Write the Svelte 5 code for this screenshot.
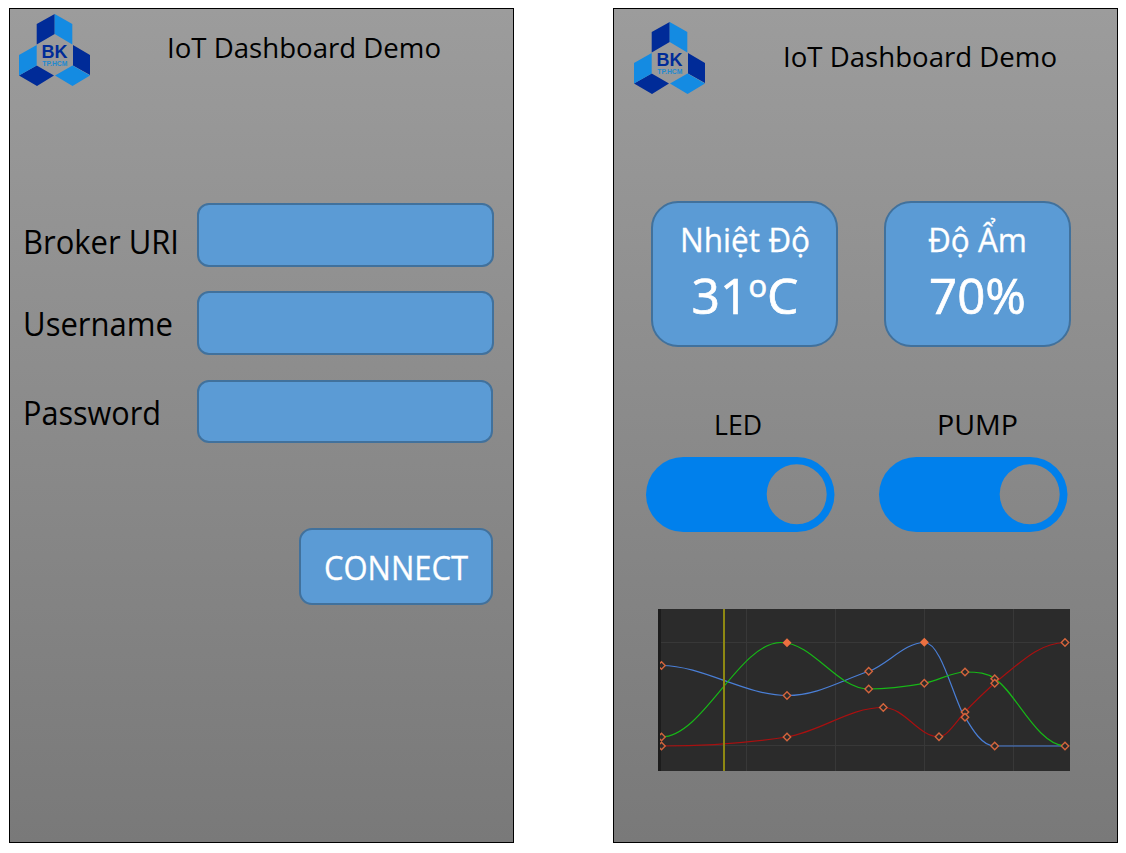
<script>
  const fields = [
    { label: 'Broker URI', width: 154, id: 'broker' },
    { label: 'Username', width: 148, id: 'username' },
    { label: 'Password', width: 136, id: 'password' }
  ];
  const switches = [
    { label: 'LED', width: 48 },
    { label: 'PUMP', width: 81 }
  ];
  const grid = [88.5, 177.5, 266.5, 355.5];
  const curves = [
    { color: '#a81010', d: 'M3.5 137C45 137 90 134 129 128C164 122 191 98.5 225.3 98.5C247 98.5 260 127.7 281 127.7C289 127.7 297 114 307 103C315 94 326 84 336.7 74C361 55 380 34 407 33.5' },
    { color: '#4a7fd6', d: 'M3.5 56.5C45 56.5 87 86.5 129 86.5C160 86.5 184 71 211 62.3C230 55 247 33.5 266.3 33.5C282 33.5 293 80 304 103C313 118 323 137 336.7 137H407' },
    { color: '#17b817', d: 'M3.5 128C45 128 81 33.5 123 33.5C155 33.5 179 80 210.7 80C231 80 251 77 266.3 74.3C281 71 295 63 307 63C320 63 329 64 336.7 69.7C357 82 379 136 407 137' }
  ];
  const keys = [
    [3.5, 56.5], [3.5, 128], [3.5, 137], [129, 86.5], [129, 128],
    [210.7, 62.3], [210.7, 80], [225.3, 98.5], [266.3, 74.3], [281, 127.7],
    [307, 63], [307, 103], [307, 108.3], [336.7, 69.7], [336.7, 74.3],
    [336.7, 137], [407, 33.5], [407, 137]
  ];
  const peaks = [[129, 33.7], [266.3, 33.3]];
</script>

{#snippet logo()}
  <svg class="logo" width="72" height="73" viewBox="0 0 72 73">
    <path fill="#002b98" d="M35.7 0V20L17.7 30.5V10zM54 31L71 41V61L54 51.500zM0 61.500L17.700 51.500L35 61.500L18 72z" />
    <path fill="#148be2" d="M35.7 0L53.3 10V30.500L35.700 20zM17.700 31V51.500L0 61.500V41zM36 61.500L53.500 51.500L71 61.500L53.500 72z" />
    <text x="22.500" y="43.500" font-size="17.500" font-weight="700" textLength="26" lengthAdjust="spacingAndGlyphs" fill="#002b98">BK</text>
    <text x="23.300" y="51.600" font-size="6.500" font-weight="700" textLength="25" lengthAdjust="spacingAndGlyphs" fill="#2189d0">TP.HCM</text>
  </svg>
{/snippet}

{#snippet fitted(text, width, size)}
  <svg class="fitted" {width} height={size} font-size={size}>
    <text y={size * 0.86} textLength={width} lengthAdjust="spacingAndGlyphs">{text}</text>
  </svg>
{/snippet}

<main>
  <section class="panel">
    <header>
      {@render logo()}
      {@render fitted('IoT Dashboard Demo', 274, 28)}
    </header>
    <form>
      {#each fields as f}
        <div class="field {f.id}">
          <label for={f.id}>{@render fitted(f.label, f.width + 2, 32)}</label>
          <input id={f.id} aria-label={f.label} />
        </div>
      {/each}
      <button type="button">{@render fitted('CONNECT', 144, 32)}</button>
    </form>
  </section>

  <section class="panel dashboard">
    <header>
      {@render logo()}
      {@render fitted('IoT Dashboard Demo', 274, 28)}
    </header>
    <div class="cards">
      <article>
        {@render fitted('Nhiệt Độ', 130, 32)}
        <svg class="fitted value" width="107" height="50" font-size="50">
          <text x="0.500" y="43" textLength="107" lengthAdjust="spacingAndGlyphs">31<tspan font-size="31" dy="-17.500">o</tspan><tspan dy="17.500">C</tspan></text>
        </svg>
      </article>
      <article>
        {@render fitted('Độ Ẩm', 99, 32)}
        <svg class="fitted value" width="97" height="50" font-size="50">
          <text y="43" textLength="97" lengthAdjust="spacingAndGlyphs">70%</text>
        </svg>
      </article>
    </div>
    <div class="switches">
      {#each switches as s}
        <div class="switch">
          {@render fitted(s.label, s.width, 28)}
          <svg class="toggle" width="189" height="75" viewBox="0 0 189 75">
            <path fill="#0080ec" fill-rule="evenodd" d="M37.500 0H151A37.500 37.500 0 0 1 151 75H37.500A37.500 37.500 0 0 1 37.500 0zM150.700 7.300A30 30 0 0 0 150.700 67.300A30 30 0 0 0 150.700 7.300z" />
          </svg>
        </div>
      {/each}
    </div>
    <svg class="chart" width="412" height="162" viewBox="0 0 412 162">
      <rect width="412" height="162" fill="#2b2b2b" />
      <rect width="3" height="162" fill="#1c1c1c" />
      <g stroke="#383838">
        {#each grid as x}<path d="M{x} 0V162" />{/each}
        <path d="M3 33.500H412M3 136.500H412" />
      </g>
      {#each curves as c}<path d={c.d} fill="none" stroke={c.color} stroke-width="1.200" />{/each}
      <path d="M66 0V162" stroke="#8e8812" stroke-width="2" />
      <g fill="#2b2b2b" stroke="#d4653d" stroke-width="1.400">
        {#each keys as [x, y]}<path d="M{x} {y - 3.7}l3.700 3.700l-3.700 3.700l-3.700 -3.700z" />{/each}
      </g>
      <g fill="#ec7040">
        {#each peaks as [x, y]}<path d="M{x} {y - 4.5}l4.500 4.500l-4.500 4.500l-4.500 -4.500z" />{/each}
      </g>
      <rect width="2" height="162" fill="#1c1c1c" />
    </svg>
  </section>
</main>

<style>
  :global(body) { margin: 0; background: #fff; }
  main {
    box-sizing: border-box;
    width: 1126px;
    height: 853px;
    padding: 8px 0 0 9px;
    display: flex;
    gap: 99px;
    font-family: "Open Sans", "Noto Sans", sans-serif;
    overflow: hidden;
  }
  svg { display: block; flex: none; }
  .panel {
    box-sizing: border-box;
    width: 505px;
    height: 835px;
    border: 1px solid #000;
    background: linear-gradient(#9c9c9c, #797979);
    display: flex;
    flex-direction: column;
  }
  header { display: flex; height: 189px; box-sizing: border-box; padding: 5px 0 0 9px; }
  header .fitted { margin: 20px 0 0 76px; }
  .logo { font-family: "Liberation Sans", Arial, sans-serif; }
  .fitted { overflow: visible; fill: currentColor; }
  form { padding: 5px 0 0 13px; display: flex; flex-direction: column; }
  .field { display: flex; align-items: flex-start; height: 88px; }
  .username { height: 89px; }
  label { width: 174px; padding-top: 23px; }
  .username label { padding-top: 17px; }
  .password label { padding-top: 17px; }
  input, button, article {
    box-sizing: border-box;
    background: #5b9bd5;
    border: 2px solid #41719c;
    border-radius: 12px;
    color: #fff;
  }
  input { width: 297px; height: 64px; margin: 0; outline: 0; }
  .password input { width: 296px; height: 63px; }
  button {
    width: 194px;
    height: 77px;
    margin: 60px 0 0 276px;
    padding: 22px 0 0 23px;
    display: flex;
    align-items: flex-start;
    font-family: inherit;
    border-radius: 13px;
  }
  button .fitted, article .fitted { stroke: currentColor; stroke-width: 0.3px; }
  .dashboard header { height: 192px; padding: 13px 0 0 20px; }
  .dashboard header .fitted { margin: 21px 0 0 77px; }
  .cards { display: flex; gap: 46px; padding-left: 37px; }
  article {
    width: 187px;
    height: 146px;
    border-radius: 27px;
    padding-top: 21px;
    display: flex;
    flex-direction: column;
    align-items: center;
  }
  article .value { margin-top: 15px; stroke-width: 0.7px; }
  .switches { display: flex; gap: 44px; padding: 64px 0 0 32px; }
  .switch { display: flex; flex-direction: column; align-items: center; gap: 18px; }
  .switch .fitted { margin-right: 5px; }
  .switch:last-child .fitted { margin: 0 0 0 7px; }
  .chart { margin: 77px 0 0 44px; }
</style>
